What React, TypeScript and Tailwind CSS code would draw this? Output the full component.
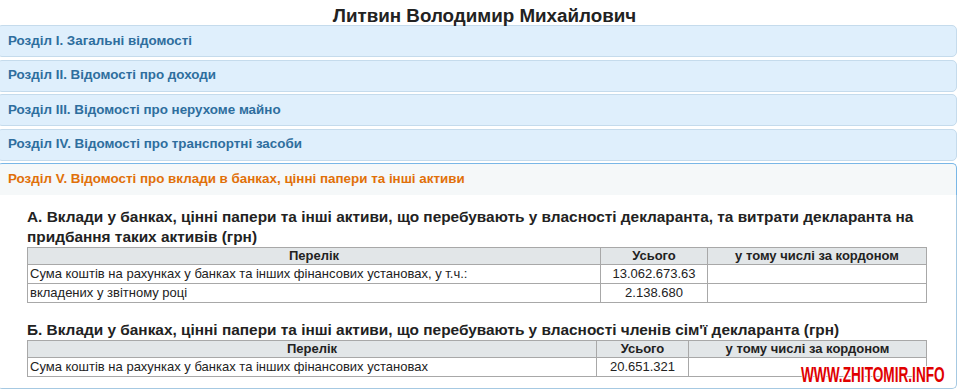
import React from "react";

const headers = [
  "Розділ I. Загальні відомості",
  "Розділ II. Відомості про доходи",
  "Розділ III. Відомості про нерухоме майно",
  "Розділ IV. Відомості про транспортні засоби",
];

function Cell({ children, className = "" }: { children?: React.ReactNode; className?: string }) {
  return <td className={`border border-[#a8a8a8] px-[2px] py-0 h-[19px] leading-[18px] ${className}`}>{children}</td>;
}
function Th({ children, className = "" }: { children?: React.ReactNode; className?: string }) {
  return <th className={`border border-[#a8a8a8] bg-[#e2e6e8] font-bold px-[2px] py-0 h-[17px] leading-[16px] text-center ${className}`}>{children}</th>;
}

export default function App() {
  return (
    <div className="relative w-[959px] h-[392px] overflow-hidden bg-white text-[#222]" style={{ fontFamily: '"Liberation Sans", Arial, sans-serif' }}>
      <h1 className="text-[18.8px] leading-[22px] font-bold text-center pt-[5px] pl-[10px] text-[#222]">Литвин Володимир Михайлович</h1>
      <div className="ml-[-3px] w-[960px] text-[13.4px]">
        {headers.map((h, i) => (
          <div
            key={i}
            className={`${i === 0 ? "mt-[-2px]" : "mt-[2.5px]"} h-[32px] border border-[#c5dbec] bg-[#dfeffc] rounded-[5px] pl-[10px] flex items-center font-bold text-[#2e6e9e]`}
          >
            {h}
          </div>
        ))}
        <div className="mt-[2.5px] h-[32px] border border-[#79b7e7] border-b-0 bg-[#f5f8f9] rounded-t-[5px] pl-[10px] flex items-center font-bold text-[#e17009]">
          Розділ V. Відомості про вклади в банках, цінні папери та інші активи
        </div>
        <div className="border border-t-0 border-[#a6c9e2] rounded-b-[5px] bg-white pl-[29px] pr-[20px] pt-[12px] h-[194px]">
          <h3 className="text-[15.4px] leading-[20px] font-bold text-[#222]">
            А. Вклади у банках, цінні папери та інші активи, що перебувають у власності декларанта, та витрати декларанта на придбання таких активів (грн)
          </h3>
          <table className="border-collapse w-[900px] text-[13px] text-[#222]">
            <thead>
              <tr>
                <Th>Перелік</Th>
                <Th className="w-[107px]">Усього</Th>
                <Th className="w-[219px]">у тому числі за кордоном</Th>
              </tr>
            </thead>
            <tbody>
              <tr>
                <Cell>Сума коштів на рахунках у банках та інших фінансових установах, у т.ч.:</Cell>
                <Cell className="text-center">13.062.673.63</Cell>
                <Cell></Cell>
              </tr>
              <tr>
                <Cell>вкладених у звітному році</Cell>
                <Cell className="text-center">2.138.680</Cell>
                <Cell></Cell>
              </tr>
            </tbody>
          </table>
          <h3 className="text-[15.4px] leading-[20px] font-bold text-[#222] mt-[17px]">
            Б. Вклади у банках, цінні папери та інші активи, що перебувають у власності членів сім'ї декларанта (грн)
          </h3>
          <table className="border-collapse w-[900px] text-[13px] text-[#222]">
            <thead>
              <tr>
                <Th>Перелік</Th>
                <Th className="w-[92px]">Усього</Th>
                <Th className="w-[238px]">у тому числі за кордоном</Th>
              </tr>
            </thead>
            <tbody>
              <tr>
                <Cell>Сума коштів на рахунках у банках та інших фінансових установах</Cell>
                <Cell className="text-center">20.651.321</Cell>
                <Cell></Cell>
              </tr>
            </tbody>
          </table>
        </div>
      </div>
      <div
        className="absolute left-[801px] top-[363px] text-[22px] leading-[24px] font-bold text-[#e00000] whitespace-nowrap origin-left scale-x-[0.62]"
        style={{ textShadow: "1px 1px 0 #fff, -1px -1px 0 #fff, 1px -1px 0 #fff, -1px 1px 0 #fff, 0 1px 0 #fff, 0 -1px 0 #fff" }}
      >
        WWW.ZHITOMIR.INFO
      </div>
    </div>
  );
}
